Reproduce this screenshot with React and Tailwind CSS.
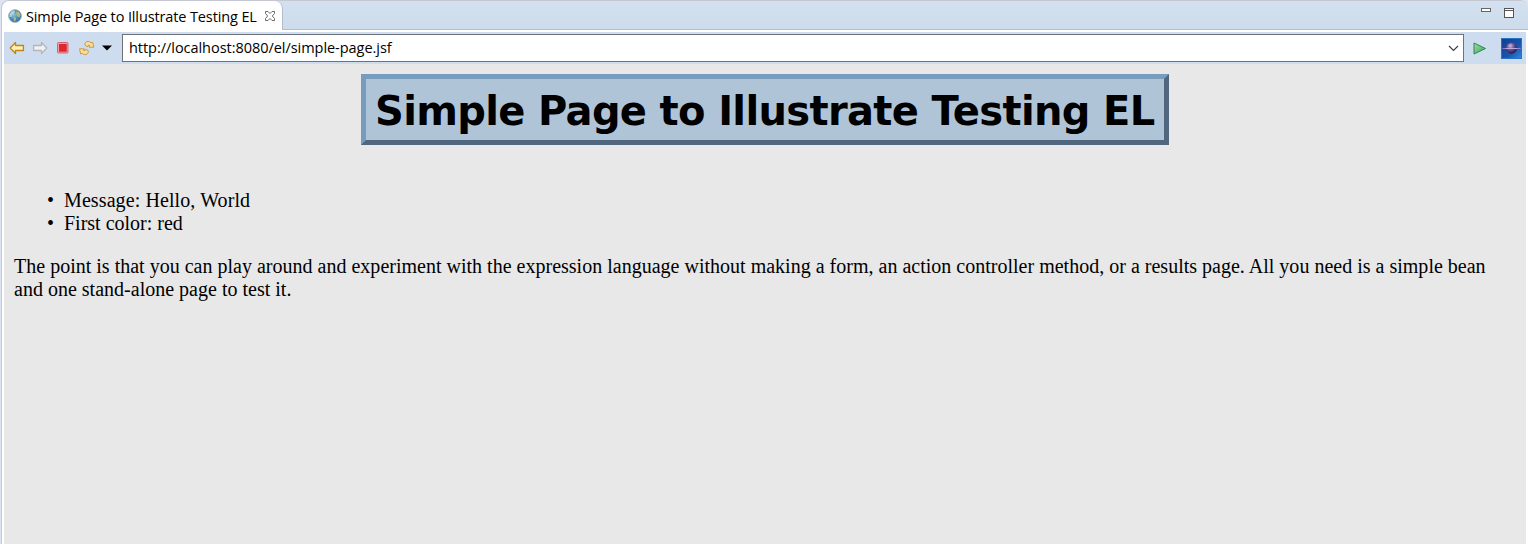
function Globe() {
  return (
    <svg width="14" height="14" viewBox="0 0 14 14" className="shrink-0">
      <defs>
        <radialGradient id="globe" cx="40%" cy="40%" r="70%">
          <stop offset="0" stopColor="#8cc3e6" />
          <stop offset=".5" stopColor="#4b8fc0" />
          <stop offset="1" stopColor="#2e6591" />
        </radialGradient>
      </defs>
      <circle cx="7" cy="7" r="6.3" fill="url(#globe)" stroke="#7d9fb5" strokeWidth=".8" />
      <path d="M1.5 5 4 1.8 7 1.5 6 4.5 4 6 3.5 8 1.6 8Z" fill="#d3e6dc" opacity=".7" />
      <path d="M8 2.5 11 3 12.5 6 11.5 8.5 10 8 8.5 6Z" fill="#b0b67c" />
      <path d="M5.5 8 8 9 7.5 11.2 6.4 12.5Z" fill="#b9c088" />
    </svg>
  );
}

function CloseIcon() {
  return (
    <svg width="12" height="12" viewBox="0 0 12 12" className="shrink-0">
      <path d="M1.5 1.5H4L6 3.5 8 1.5H10.5V3.5L8.3 6 10.5 8.5V10.5H8L6 8.5 4 10.5H1.5V8.5L3.7 6 1.5 3.5Z" fill="#fff" stroke="#6b6b6b" />
    </svg>
  );
}

function Arrow({ fill, stroke, flip }) {
  return (
    <svg width="16" height="14" viewBox="0 0 16 14" className="shrink-0">
      <path
        d="M1.2 7 6.5 1.5V4.5H14.4V9.5H6.5V12.5Z"
        transform={flip ? "translate(16 0) scale(-1 1)" : undefined}
        fill={fill}
        stroke={stroke}
        strokeWidth="1.3"
        strokeLinejoin="round"
      />
    </svg>
  );
}

function StopIcon() {
  return (
    <svg width="12" height="12" viewBox="0 0 12 12" className="shrink-0">
      <rect x=".5" y=".5" width="10.5" height="10.5" rx="1" fill="#ee9da2" stroke="#d9646f" />
      <rect x="2.4" y="2.4" width="6.8" height="6.8" fill="#e3262e" stroke="#cf2434" strokeWidth=".8" />
    </svg>
  );
}

function RefreshIcon() {
  return (
    <svg width="16" height="16" viewBox="0 0 16 16" className="shrink-0">
      <g fill="#fae0a0" stroke="#c9922f" strokeWidth=".9" strokeLinejoin="round">
        <path d="M5.8 3.6 7.6 1.6H10.6L12 3 13.6 2.2 14.8 7.2H10.2L10.8 5.6 9.4 5 8.8 6.8 6.6 5.8Z" />
        <path d="M9.4 12.2 7.6 14.4H4.6L3.2 13.2 1.6 14 .6 8.8H5.2L4.4 10.4 5.8 11 6.4 9.4 8.8 10.2Z" />
      </g>
    </svg>
  );
}

function PlayIcon() {
  return (
    <svg width="14" height="13" viewBox="0 0 14 13" className="shrink-0">
      <defs>
        <linearGradient id="play" x1="0" y1="0" x2="1" y2="1">
          <stop offset="0" stopColor="#a2dca0" />
          <stop offset="1" stopColor="#35a463" />
        </linearGradient>
      </defs>
      <path d="M1 1 12.5 6.5 1 12Z" fill="url(#play)" stroke="#2a8a4c" strokeLinejoin="round" />
    </svg>
  );
}

function EclipseIcon() {
  return (
    <svg width="21" height="21" viewBox="0 0 21 21" className="shrink-0">
      <defs>
        <linearGradient id="sky" x1="0" y1="0" x2="1" y2="1">
          <stop offset="0" stopColor="#143e8c" />
          <stop offset=".6" stopColor="#1a55ad" />
          <stop offset="1" stopColor="#2f8be0" />
        </linearGradient>
        <radialGradient id="planet" cx="40%" cy="30%" r="70%">
          <stop offset="0" stopColor="#c9bfe6" />
          <stop offset=".45" stopColor="#6d5596" />
          <stop offset="1" stopColor="#26174d" />
        </radialGradient>
      </defs>
      <rect x=".5" y=".5" width="20" height="20" fill="url(#sky)" stroke="#2874c9" />
      <circle cx="10.5" cy="10.2" r="5.5" fill="url(#planet)" />
      <path d="M1.5 10.5H19.5" stroke="#8c86d0" strokeWidth="1" />
      <path d="M5 10.5H16" stroke="#c0a9d8" strokeWidth="1" />
    </svg>
  );
}

export default function App() {
  return (
    <div className="flex h-[544px] w-[1528px] overflow-hidden bg-[#dfe4f3] pl-px text-black">
      <div className="flex min-w-0 flex-1 flex-col rounded-tl-lg rounded-tr-lg border-l border-t border-[#c5c7d2] bg-white">
        <div className="flex h-[29px] shrink-0 justify-between rounded-t-lg bg-linear-to-b from-[#d2e0ef] to-[#cddcec] font-['Open_Sans',sans-serif]">
          <div className="flex h-[29px] w-[281px] items-center rounded-t-lg border-r border-[#b5bdcd] bg-white pl-[6px] pt-px">
            <Globe />
            <span className="ml-[4px] w-[232px] whitespace-nowrap pt-[2px] text-[14.5px] leading-5 tracking-[-0.12px]">
              Simple Page to Illustrate Testing EL
            </span>
            <span className="ml-[6px]">
              <CloseIcon />
            </span>
          </div>
          <div className="flex flex-1 items-start justify-end border-b border-[#b5bdcd] pr-[14px] pt-[7px]">
            <div className="h-1 w-[10px] border border-[#666] bg-white" />
            <div className="ml-[13px] h-[10px] w-[10px] border border-[#555] bg-white">
              <div className="h-[2px] border-b border-[#555]" />
            </div>
          </div>
        </div>
        <div className="mr-[2px] mt-[2px] flex min-h-0 flex-1 flex-col pl-[2px]">
          <div className="flex h-8 shrink-0 items-center bg-[#cddcee] pl-[5px] pr-[4px]">
            <Arrow fill="#fff1b5" stroke="#c18518" />
            <span className="ml-[7px] flex">
              <Arrow fill="#f1f1f2" stroke="#b5b6ba" flip />
            </span>
            <span className="ml-[9px] flex">
              <StopIcon />
            </span>
            <span className="ml-[10px] flex">
              <RefreshIcon />
            </span>
            <svg width="10" height="6" viewBox="0 0 10 6" className="ml-[7px] shrink-0">
              <path d="M0 .5H10L5 5.5Z" />
            </svg>
            <div className="ml-[10px] flex h-7 w-[1342px] shrink-0 items-center justify-between border border-[#6f7277] bg-white pl-[6px] pr-[4px] font-['Open_Sans',sans-serif] text-[14.5px] leading-5">
              <span className="whitespace-nowrap tracking-[-0.04px]">http://localhost:8080/el/simple-page.jsf</span>
              <svg width="11" height="7" viewBox="0 0 11 7">
                <path d="M1 1 5.5 5.5 10 1" fill="none" stroke="#404040" strokeWidth="1.2" />
              </svg>
            </div>
            <span className="ml-[9px] flex">
              <PlayIcon />
            </span>
            <span className="ml-auto flex">
              <EclipseIcon />
            </span>
          </div>
          <main className="flex-1 bg-[#e8e8e8] pl-[10px] pr-[10px] pt-[10px] font-['Liberation_Serif',serif] text-[20px] leading-[23px]">
            <h1 className="ml-[347px] flex h-[71px] w-[808px] items-center border-5 border-b-[#50677f] border-l-[#789cbe] border-r-[#50677f] border-t-[#789cbe] bg-[#b0c4d8] pl-[9px] pt-[2px] font-['DejaVu_Sans',sans-serif] text-[40px] font-bold leading-[48px] tracking-[-0.66px] whitespace-nowrap">
              Simple Page to Illustrate Testing EL
            </h1>
            <ul className="mt-[44px] pl-[33px]">
              <li className="flex">
                <span className="w-[17px]">•</span>
                <span className="tracking-[0.1px]">Message: Hello, World</span>
              </li>
              <li className="flex">
                <span className="w-[17px]">•</span>
                <span>First color: red</span>
              </li>
            </ul>
            <p className="mt-5 tracking-[0.008px]">
              The point is that you can play around and experiment with the expression language without making a form, an action controller method, or a results page. All you need is a simple bean and one stand-alone page to test it.
            </p>
          </main>
        </div>
      </div>
    </div>
  );
}
